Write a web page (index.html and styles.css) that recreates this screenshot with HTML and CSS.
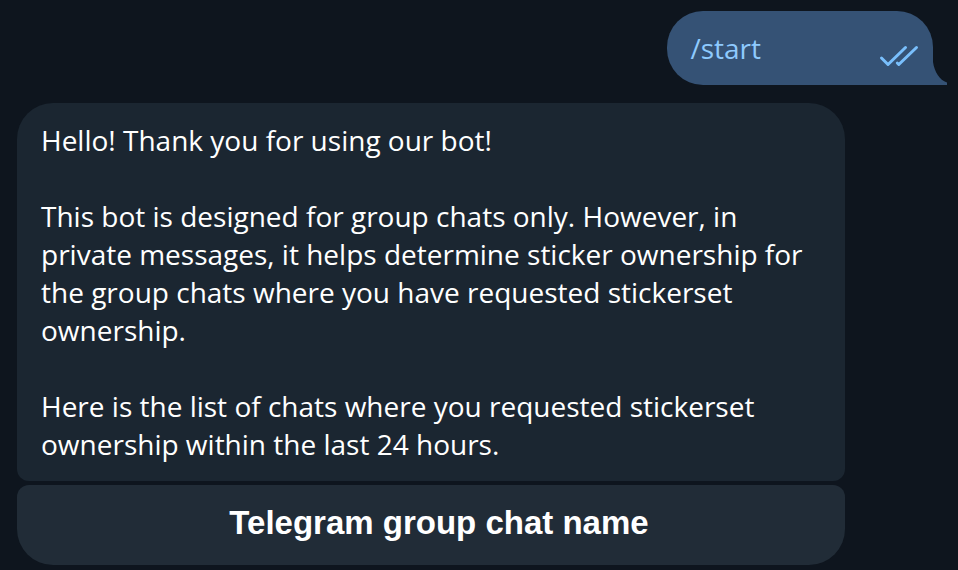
FILE: index.html
```html
<!DOCTYPE html>
<html lang="en">
<head>
<meta charset="utf-8">
<meta name="viewport" content="width=device-width, initial-scale=1">
<title>Bot chat</title>
<link rel="stylesheet" href="styles.css">
</head>
<body>
<main class="chat">
  <article class="outgoing">
    <a class="command" href="#start">/start</a>
    <svg class="checks" viewBox="0 0 40 24" role="img" aria-label="Read">
      <path d="M2.500 15l6.500 6.500L26.500 4.500M18.300 20l1.500 1.500L37.500 4.500"/>
    </svg>
    <svg class="tail" viewBox="0 0 14 23" aria-hidden="true"><path d="M0 0C1.500 10 6.500 18 14 20.500V23H0Z"/></svg>
  </article>
  <section class="incoming">
    <article class="message">
      <p>Hello! Thank you for using our bot!</p>
      <p>This bot is designed for group chats only. However, in private messages, it helps determine sticker ownership for the group chats where you have requested stickerset ownership.</p>
      <p>Here is the list of chats where you requested stickerset ownership within the last 24 hours.</p>
    </article>
    <button class="choice" type="button">Telegram group chat name</button>
  </section>
</main>
</body>
</html>
```
FILE: styles.css
```css
* { box-sizing: border-box; }
body {
  margin: 0;
  background: #0e151e;
  color: #fff;
  font-family: "Open Sans", sans-serif;
  font-size: 28px;
  line-height: 38px;
}
.chat {
  display: flex;
  flex-direction: column;
  gap: 18px;
  padding: 11px 25px 5px 17px;
}
.outgoing {
  position: relative;
  align-self: flex-end;
  display: flex;
  align-items: center;
  gap: 118px;
  padding: 18px 14px 18px 23px;
  border-radius: 36px 36px 0 36px;
  background: #355275;
}
.command { color: #8ecafe; text-decoration: none; }
.checks {
  width: 40px;
  height: 24px;
  margin-top: 14px;
  fill: none;
  stroke: #79bffc;
  stroke-width: 3;
  stroke-linecap: round;
  stroke-linejoin: round;
}
.tail {
  position: absolute;
  left: 100%;
  bottom: 0;
  width: 14px;
  height: 23px;
  fill: #355275;
}
.incoming {
  display: flex;
  flex-direction: column;
  gap: 4px;
  max-width: 828px;
}
.message {
  padding: 18px 24px;
  border-radius: 36px 36px 12px 12px;
  background: #1b2631;
}
.message p { margin: 0 0 38px; }
.message p:last-child { margin-bottom: 0; }
.choice {
  padding: 19px 16px 23px 32px;
  border: 0;
  border-radius: 12px 12px 36px 36px;
  background: #212c37;
  color: #fff;
  font: bold 33px/38px "Liberation Sans", sans-serif;
}
```
